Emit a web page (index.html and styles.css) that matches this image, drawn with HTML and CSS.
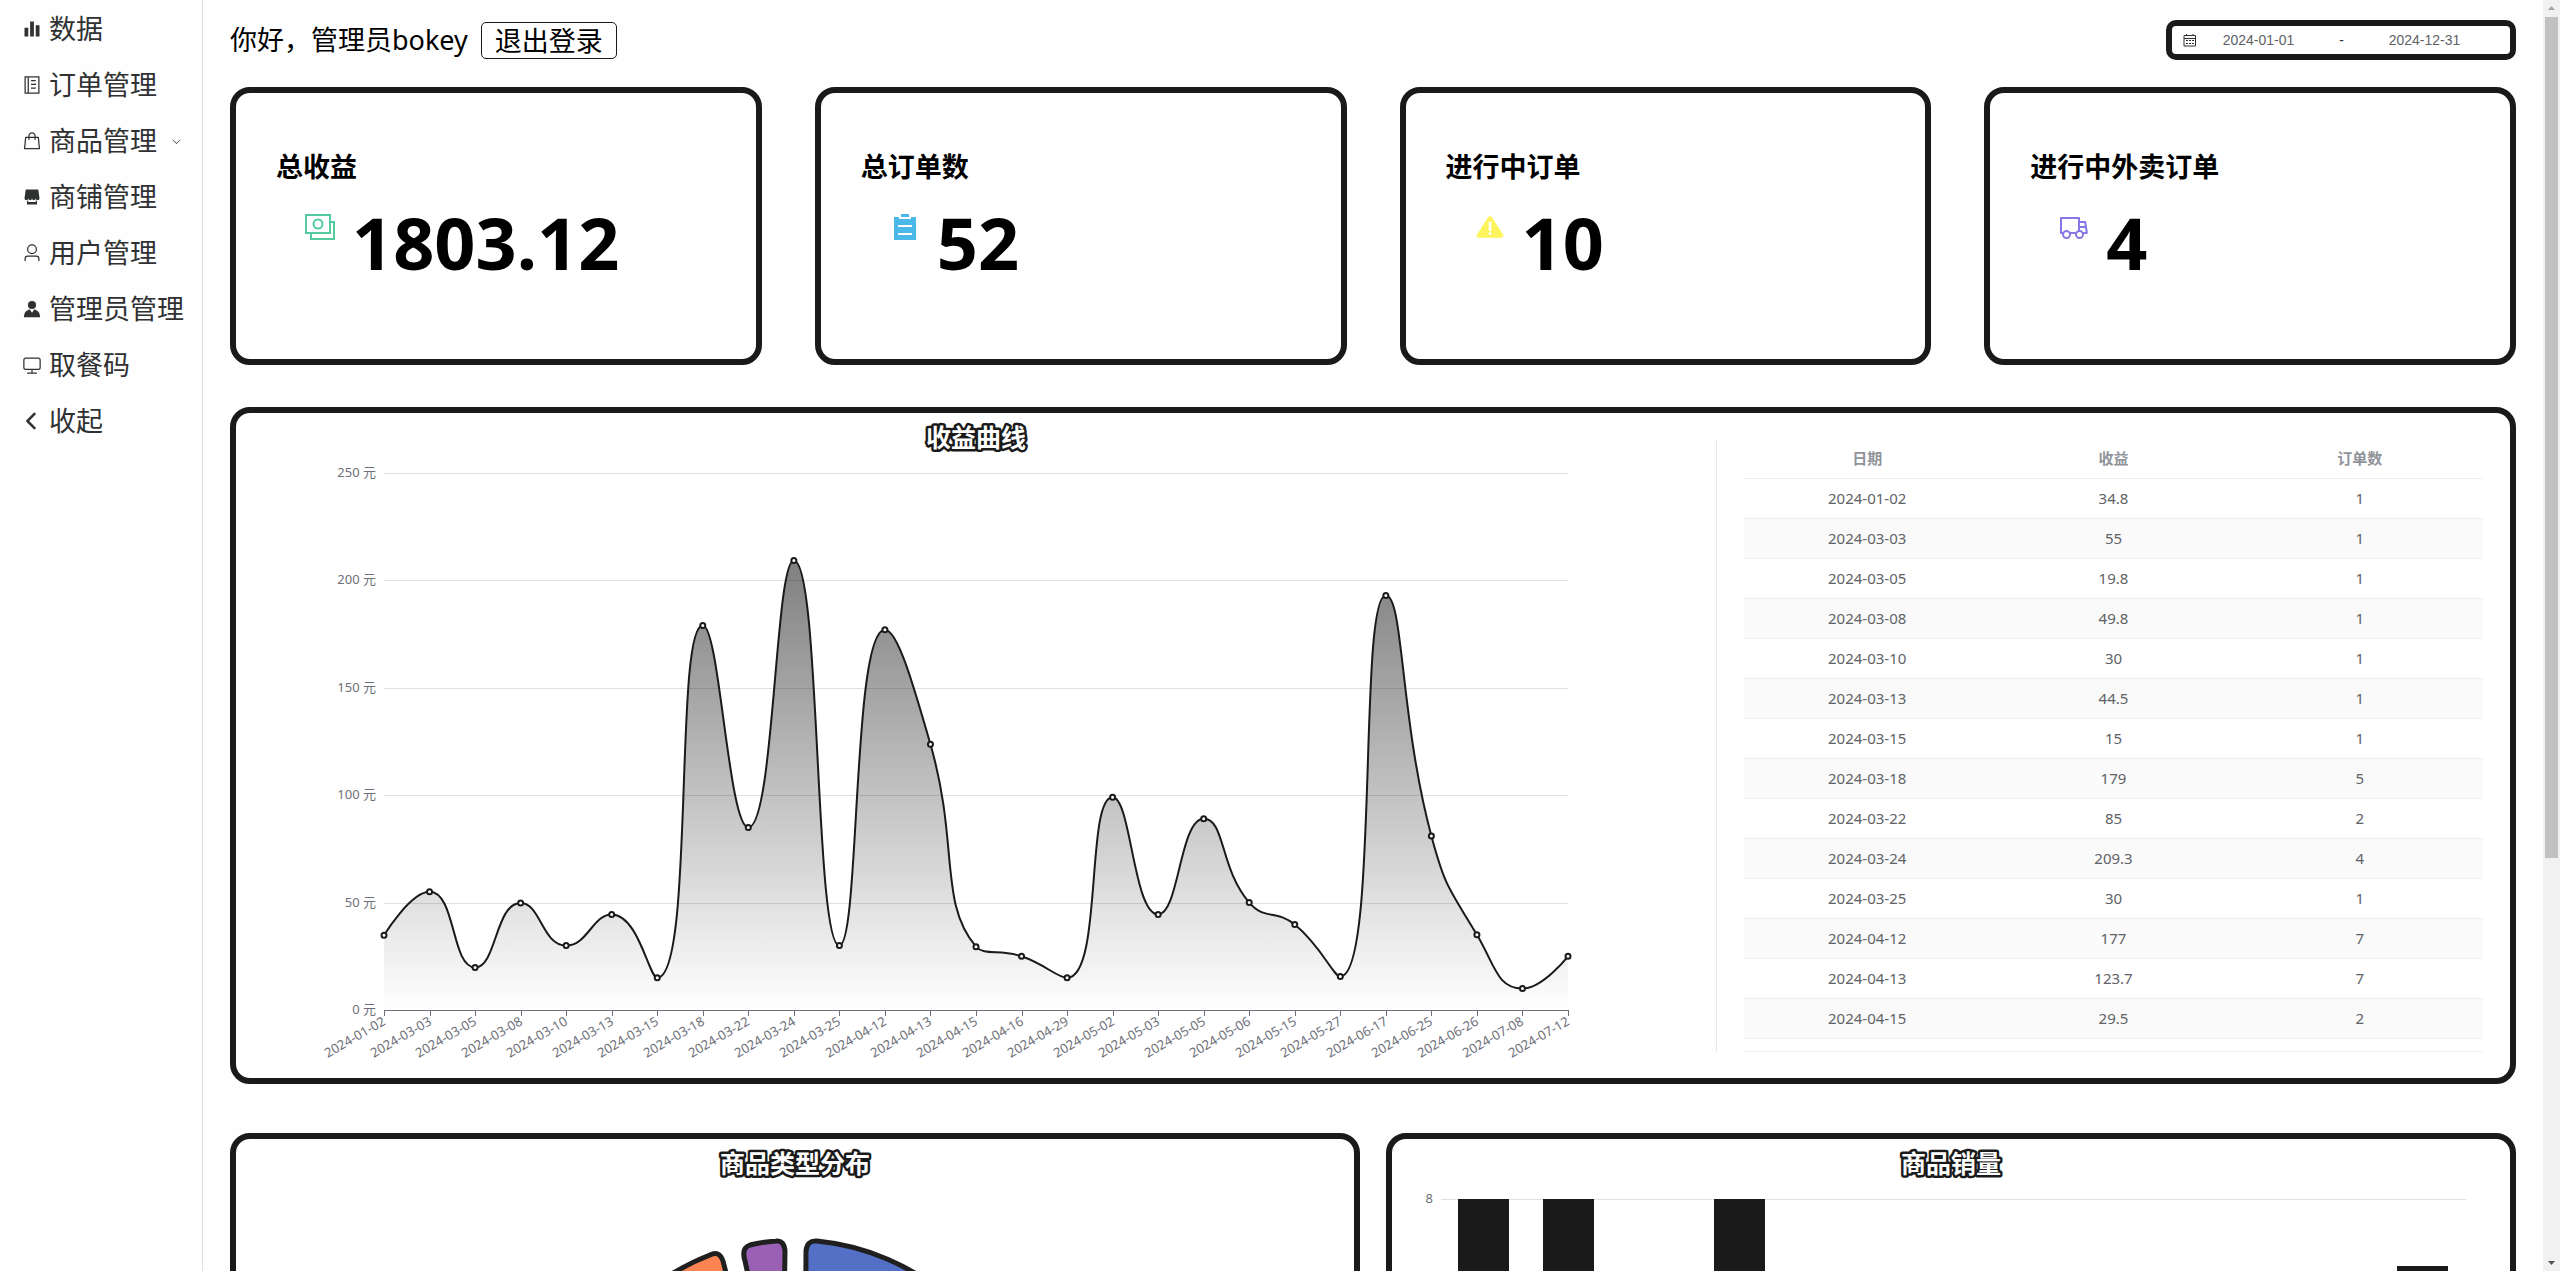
FILE: index.html
```html
<!DOCTYPE html>
<html lang="zh-CN">
<head>
  <meta charset="utf-8">
  <title>数据</title>
  <link rel="stylesheet" href="styles.css">
</head>
<body>
  <div class="app">
    <nav class="sidebar">
      <a class="nav-item" href="#data">
        <svg class="nav-icon" viewBox="0 0 1024 1024"><path d="M416 896V128h192v768zm-288 0V448h192v448zm576 0V320h192v576z"/></svg>
        <span>数据</span>
      </a>
      <a class="nav-item" href="#orders">
        <svg class="nav-icon" viewBox="0 0 1024 1024"><path fill-rule="evenodd" d="M128 64h768v896H128zM192 128v768h96V128zM352 128v768h480V128zM464 256h240v64H464zM464 448h160v64H464zM464 448h240v64H464zM464 640h240v64H464z"/><path d="M464 448h240v64H464z"/></svg>
        <span>订单管理</span>
      </a>
      <a class="nav-item" href="#goods">
        <svg class="nav-icon" viewBox="0 0 1024 1024"><path d="M320 288v-22.336C320 154.688 405.504 64 512 64s192 90.688 192 201.664v22.4h131.072a32 32 0 0 1 31.808 28.8l57.6 576a32 32 0 0 1-31.808 35.2H131.328a32 32 0 0 1-31.808-35.2l57.6-576a32 32 0 0 1 31.808-28.8H320zm64 0h256v-22.336C640 189.248 582.272 128 512 128c-70.272 0-128 61.248-128 137.664v22.4zm-64 64H217.92l-51.2 512h690.56l-51.264-512H704v96h-64v-96H384v96h-64z"/></svg>
        <span>商品管理</span>
        <svg class="nav-arrow" viewBox="0 0 1024 1024"><path d="M831.872 340.864 512 652.672 192.128 340.864a30.592 30.592 0 0 0-42.752 0 29.12 29.12 0 0 0 0 41.6L489.664 714.24a32 32 0 0 0 44.672 0l340.288-331.712a29.12 29.12 0 0 0 0-41.728 30.592 30.592 0 0 0-42.752 0z"/></svg>
      </a>
      <a class="nav-item" href="#shop">
        <svg class="nav-icon" viewBox="0 0 1024 1024"><path d="M704 704h64v192H256V704h64v64h384zm188.544-152.192C894.528 559.616 896 567.616 896 576a96 96 0 1 1-192 0 96 96 0 1 1-192 0 96 96 0 1 1-192 0 96 96 0 1 1-192 0c0-8.384 1.408-16.384 3.392-24.192L192 128h640z"/></svg>
        <span>商铺管理</span>
      </a>
      <a class="nav-item" href="#users">
        <svg class="nav-icon" viewBox="0 0 1024 1024"><path d="M512 512a192 192 0 1 0 0-384 192 192 0 0 0 0 384m0 64a256 256 0 1 1 0-512 256 256 0 0 1 0 512m320 320v-96a96 96 0 0 0-96-96H288a96 96 0 0 0-96 96v96a32 32 0 1 1-64 0v-96a160 160 0 0 1 160-160h448a160 160 0 0 1 160 160v96a32 32 0 1 1-64 0"/></svg>
        <span>用户管理</span>
      </a>
      <a class="nav-item" href="#admins">
        <svg class="nav-icon" viewBox="0 0 1024 1024"><path d="M628.736 528.896A416 416 0 0 1 928 928H96a415.872 415.872 0 0 1 299.264-399.104L512 704zM720 304a208 208 0 1 1-416 0 208 208 0 0 1 416 0"/></svg>
        <span>管理员管理</span>
      </a>
      <a class="nav-item" href="#pickup">
        <svg class="nav-icon" viewBox="0 0 1024 1024"><path d="M544 768v128h192a32 32 0 1 1 0 64H288a32 32 0 1 1 0-64h192V768H192A128 128 0 0 1 64 640V256a128 128 0 0 1 128-128h640a128 128 0 0 1 128 128v384a128 128 0 0 1-128 128zM192 192a64 64 0 0 0-64 64v384a64 64 0 0 0 64 64h640a64 64 0 0 0 64-64V256a64 64 0 0 0-64-64z"/></svg>
        <span>取餐码</span>
      </a>
      <a class="nav-item" href="#collapse">
        <svg class="nav-icon" viewBox="0 0 1024 1024"><path d="M685.248 104.704a64 64 0 0 1 0 90.496L368.448 512l316.8 316.8a64 64 0 0 1-90.496 90.496L232.704 557.248a64 64 0 0 1 0-90.496l362.048-362.048a64 64 0 0 1 90.496 0z"/></svg>
        <span>收起</span>
      </a>
    </nav>

    <main class="main">
      <header class="topbar">
        <span>你好，管理员bokey</span>
        <button class="logout" type="button">退出登录</button>
        <div class="date-range">
          <svg class="date-icon" viewBox="0 0 14 14"><path d="M1 2.5h11.500v10.500H1zM1 5.500h11.500M3.500 1v2M10 1v2" fill="none" stroke="#303133"/><path d="M3 7h2v1H3zM6 7h2v1H6zM9 7h2v1H9zM3 10h2v1H3zM6 10h2v1H6zM9 10h2v1H9z" fill="#303133"/></svg>
          <input type="text" value="2024-01-01" aria-label="开始日期">
          <span class="date-sep">-</span>
          <input type="text" value="2024-12-31" aria-label="结束日期">
        </div>
      </header>

      <section class="cards">
        <article class="card">
          <h3 class="card-label">总收益</h3>
          <div class="card-value">
            <svg class="card-icon" viewBox="0 0 32 32" fill="none" stroke="#54cb9f" stroke-width="2"><path d="M2 4h24v18H2zM26 11h4v17H7v-6"/><circle cx="14" cy="13" r="4.500"/></svg>
            <span>1803.12</span>
          </div>
        </article>
        <article class="card">
          <h3 class="card-label">总订单数</h3>
          <div class="card-value">
            <svg class="card-icon" viewBox="0 0 1024 1024" fill="#4ab8e8"><path d="M704 192h160v736H160V192h160v64h384v-64zM288 512h448v-64H288v64zm0 256h448v-64H288v64zm96-576V96h256v96H384z"/></svg>
            <span>52</span>
          </div>
        </article>
        <article class="card">
          <h3 class="card-label">进行中订单</h3>
          <div class="card-value">
            <svg class="card-icon" viewBox="0 0 1024 1024" fill="#fdf35a"><path d="M928.99 755.83 574.6 203.25c-12.89-20.16-36.76-32.58-62.6-32.58s-49.71 12.43-62.6 32.58L95.01 755.83c-12.91 20.12-12.9 44.91.01 65.03 12.92 20.12 36.78 32.51 62.59 32.49h708.78c25.82.01 49.68-12.37 62.59-32.49 12.91-20.12 12.92-44.91.01-65.03M554.67 768h-85.33v-85.33h85.33zm0-426.67v298.66h-85.33V341.32z"/></svg>
            <span>10</span>
          </div>
        </article>
        <article class="card">
          <h3 class="card-label">进行中外卖订单</h3>
          <div class="card-value">
            <svg class="card-icon" viewBox="0 0 1024 1024" fill="#8577e6"><path d="M128.896 736H96a32 32 0 0 1-32-32V224a32 32 0 0 1 32-32h576a32 32 0 0 1 32 32v96h164.544a32 32 0 0 1 31.616 27.136l54.144 352A32 32 0 0 1 922.688 736h-91.52a144 144 0 1 1-286.272 0H415.104a144 144 0 1 1-286.272 0zm23.36-64a143.872 143.872 0 0 1 239.488 0H568.32c17.088-25.6 42.24-45.376 71.744-55.808V256H128v416zm655.488 0h77.632l-19.648-128H704v64.896A144 144 0 0 1 807.744 672m48.128-192-14.72-96H704v96h151.872zM688 832a80 80 0 1 0 0-160 80 80 0 0 0 0 160m-416 0a80 80 0 1 0 0-160 80 80 0 0 0 0 160"/></svg>
            <span>4</span>
          </div>
        </article>
      </section>

      <section class="panel income">
        <svg class="chart" id="income-chart" viewBox="0 0 1480 665">
          <defs>
            <linearGradient id="area-fill" x1="0" y1="0" x2="0" y2="1">
              <stop offset="0" stop-color="#000" stop-opacity=".5"/>
              <stop offset="1" stop-color="#000" stop-opacity="0"/>
            </linearGradient>
          </defs>
          <text class="chart-title" x="740" y="34">收益曲线</text>
        </svg>
        <div class="income-side">
          <div class="table-box">
            <table class="income-table">
              <thead><tr><th>日期</th><th>收益</th><th>订单数</th></tr></thead>
              <tbody>
                <tr><td>2024-01-02</td><td>34.8</td><td>1</td></tr>
                <tr><td>2024-03-03</td><td>55</td><td>1</td></tr>
                <tr><td>2024-03-05</td><td>19.8</td><td>1</td></tr>
                <tr><td>2024-03-08</td><td>49.8</td><td>1</td></tr>
                <tr><td>2024-03-10</td><td>30</td><td>1</td></tr>
                <tr><td>2024-03-13</td><td>44.5</td><td>1</td></tr>
                <tr><td>2024-03-15</td><td>15</td><td>1</td></tr>
                <tr><td>2024-03-18</td><td>179</td><td>5</td></tr>
                <tr><td>2024-03-22</td><td>85</td><td>2</td></tr>
                <tr><td>2024-03-24</td><td>209.3</td><td>4</td></tr>
                <tr><td>2024-03-25</td><td>30</td><td>1</td></tr>
                <tr><td>2024-04-12</td><td>177</td><td>7</td></tr>
                <tr><td>2024-04-13</td><td>123.7</td><td>7</td></tr>
                <tr><td>2024-04-15</td><td>29.5</td><td>2</td></tr>
              </tbody>
            </table>
          </div>
        </div>
      </section>

      <section class="bottom">
        <div class="panel">
          <svg class="chart" viewBox="0 0 1118 665">
            <text class="chart-title" x="559" y="34">商品类型分布</text>
            <g stroke="#1f1f1f" stroke-width="5" stroke-linejoin="round">
              <path fill="#5470c6" d="M569 300L570 112Q571 101 581 102A237 237 0 0 1 790 290Z"/>
              <path fill="#9a60b4" d="M546 290L509 122Q505 109 514 106Q526 103 540 102Q548 101 549 112Z"/>
              <path fill="#fc8452" d="M530 290L487 122Q483 111 474 116A237 237 0 0 0 330 280Z"/>
            </g>
          </svg>
        </div>
        <div class="panel">
          <svg class="chart" viewBox="0 0 1118 665">
            <text class="chart-title" x="559" y="34">商品销量</text>
            <path class="grid-line" d="M49 60.500H1074"/>
            <text class="axis-label" x="41" y="64" text-anchor="end">8</text>
            <g fill="#1a1a1a">
              <rect x="66" y="60" width="51" height="536"/>
              <rect x="151" y="60" width="51" height="536"/>
              <rect x="322" y="60" width="51" height="536"/>
              <rect x="1005" y="127" width="51" height="469"/>
            </g>
          </svg>
        </div>
      </section>
    </main>

    <div class="scrollbar">
      <svg viewBox="0 0 17 17"><path d="M5 10h7L8.500 6z" fill="#a3a3a3"/></svg>
      <div class="scroll-track"><div class="scroll-thumb"></div></div>
      <svg viewBox="0 0 17 17"><path d="M5 7h7l-3.500 4z" fill="#505050"/></svg>
    </div>
  </div>
  <script src="chart.js"></script>
</body>
</html>
```
FILE: styles.css
```css
* {
  box-sizing: border-box;
}

body {
  margin: 0;
  background: #fefefe;
  color: #000;
  font-family: "Noto Sans", "Noto Sans CJK SC", sans-serif;
  font-size: 27px;
  line-height: 40px;
}

.app {
  display: flex;
  height: 100vh;
  overflow: hidden;
}

.sidebar {
  flex: none;
  width: 203px;
  padding-top: 1px;
  border-right: 1px solid #dcdfe6;
}

.nav-item {
  display: flex;
  align-items: center;
  height: 56px;
  padding-left: 22px;
  color: #303133;
  text-decoration: none;
  white-space: nowrap;
}

.nav-icon {
  flex: none;
  width: 20px;
  height: 20px;
  margin-right: 7px;
  fill: currentColor;
}

.nav-arrow {
  width: 11px;
  height: 11px;
  margin-left: 14px;
  fill: currentColor;
}

.main {
  flex: 1;
  min-width: 0;
  padding: 20px 27px 0;
}

.topbar {
  display: flex;
  align-items: center;
  gap: 13px;
  height: 40px;
  margin-bottom: 27px;
}

.logout {
  height: 37px;
  padding: 0 13px;
  border: 1px solid #1a1a1a;
  border-radius: 5px;
  background: #fff;
  color: #000;
  font: inherit;
  line-height: 35px;
}

.date-range {
  display: flex;
  align-items: center;
  width: 350px;
  height: 40px;
  margin-left: auto;
  padding: 0 24px 0 11px;
  border: 6px solid #1a1a1a;
  border-radius: 10px;
  background: #fff;
  color: #606266;
  font-family: "Liberation Sans", Arial, sans-serif;
  font-size: 14px;
  line-height: 20px;
}

.date-icon {
  flex: none;
  width: 14px;
  height: 14px;
}

.date-range input {
  flex: 1;
  min-width: 0;
  padding: 0;
  border: 0;
  background: none;
  color: inherit;
  font: inherit;
  text-align: center;
}

.date-sep {
  width: 43px;
  color: #303133;
  text-align: center;
}

.cards {
  display: grid;
  grid-template-columns: repeat(4, 1fr);
  gap: 53px;
  margin-bottom: 42px;
}

.card,
.panel {
  border: 6px solid #1a1a1a;
  border-radius: 20px;
  background: #fff;
}

.card {
  padding: 54px 40px 62px;
}

.card-label {
  margin: 0;
  font-size: 27px;
  font-weight: 700;
}

.card-value {
  display: flex;
  gap: 16px;
  padding-left: 28px;
  font-size: 72px;
  font-weight: 700;
  line-height: 110px;
}

.card-icon {
  width: 32px;
  height: 32px;
  margin-top: 24px;
}

.income {
  display: grid;
  grid-template-columns: 1480fr 794fr;
  margin-bottom: 49px;
}

.chart {
  display: block;
  width: 100%;
  height: auto;
}

.chart-title {
  fill: #fff;
  stroke: #1a1a1a;
  stroke-width: 5px;
  stroke-linejoin: round;
  paint-order: stroke;
  font-size: 25px;
  font-weight: 700;
  text-anchor: middle;
}

.axis-label {
  fill: #6e7079;
  font-size: 13px;
}

.grid-line {
  stroke: #e0e0e0;
}

.axis-line {
  stroke: #6e7079;
}

.curve {
  fill: none;
  stroke: #1a1a1a;
  stroke-width: 2px;
}

.curve-point {
  fill: #fff;
  stroke: #1a1a1a;
  stroke-width: 2px;
}

.income-side {
  display: flex;
  margin: 26px 0;
  padding: 0 27px;
  border-left: 1px solid #e4e7ed;
}

.table-box {
  flex: 1;
  border-bottom: 1px solid #ebeef5;
}

.income-table {
  width: 100%;
  border-collapse: separate;
  border-spacing: 0;
  table-layout: fixed;
  color: #606266;
  font-size: 15px;
  line-height: 23px;
  text-align: center;
}

.income-table th,
.income-table td {
  height: 40px;
  padding: 0;
  border-bottom: 1px solid #ebeef5;
}

.income-table th {
  color: #909399;
}

.income-table tbody tr:nth-child(even) {
  background: #fafafa;
}

.bottom {
  display: grid;
  grid-template-columns: 1fr 1fr;
  gap: 26px;
}

.scrollbar {
  display: flex;
  flex: none;
  flex-direction: column;
  width: 17px;
  background: #f1f1f1;
}

.scrollbar svg {
  flex: none;
  height: 17px;
}

.scroll-track {
  flex: 1;
  padding: 0 2px;
}

.scroll-thumb {
  height: 68%;
  background: #c1c1c1;
}
```
FILE: chart.js
```js
const data = [
  ['2024-01-02', 34.8], ['2024-03-03', 55], ['2024-03-05', 19.8], ['2024-03-08', 49.8],
  ['2024-03-10', 30], ['2024-03-13', 44.5], ['2024-03-15', 15], ['2024-03-18', 179],
  ['2024-03-22', 85], ['2024-03-24', 209.3], ['2024-03-25', 30], ['2024-04-12', 177],
  ['2024-04-13', 123.7], ['2024-04-15', 29.5], ['2024-04-16', 25], ['2024-04-29', 15],
  ['2024-05-02', 99], ['2024-05-03', 44.5], ['2024-05-05', 89], ['2024-05-06', 50],
  ['2024-05-15', 39.8], ['2024-05-27', 15.6], ['2024-06-17', 193], ['2024-06-25', 81],
  ['2024-06-26', 35], ['2024-07-08', 10], ['2024-07-12', 25]
];

const svg = document.getElementById('income-chart');
const left = 148, right = 1332, top0 = 60, base = 597, max = 250;

function add(name, attrs, text) {
  const el = document.createElementNS('http://www.w3.org/2000/svg', name);
  for (const key in attrs) el.setAttribute(key, attrs[key]);
  if (text !== undefined) el.textContent = text;
  svg.appendChild(el);
}

const yOf = v => base - (base - top0) * v / max;
const pts = data.map((d, i) => [left + (right - left) * i / (data.length - 1), yOf(d[1])]);
const clamp = (v, a, b) => Math.max(Math.min(v, Math.max(a, b)), Math.min(a, b));

// Smooth curve whose control points never leave the range of their segment.
function smoothPath(p) {
  let d = `M${p[0][0]} ${p[0][1]}`;
  let c0 = p[0];
  for (let i = 1; i < p.length; i++) {
    const prev = p[i - 1], cur = p[i], next = p[i + 1];
    let c1 = cur, n0 = cur;
    if (next) {
      const lp = Math.hypot(cur[0] - prev[0], cur[1] - prev[1]);
      const ln = Math.hypot(next[0] - cur[0], next[1] - cur[1]);
      const r = ln / (ln + lp);
      n0 = [0, 1].map(k => clamp(cur[k] + (next[k] - prev[k]) * 0.5 * r, cur[k], next[k]));
      c1 = [0, 1].map(k => clamp(cur[k] - (n0[k] - cur[k]) * lp / ln, prev[k], cur[k]));
      n0 = [0, 1].map(k => cur[k] + (cur[k] - c1[k]) * ln / lp);
    }
    d += `C${c0[0]} ${c0[1]} ${c1[0]} ${c1[1]} ${cur[0]} ${cur[1]}`;
    c0 = n0;
  }
  return d;
}

for (let v = 0; v <= max; v += 50) {
  const y = Math.round(yOf(v)) + 0.5;
  add('path', { class: v ? 'grid-line' : 'axis-line', d: `M${left} ${y}H${right}` });
  add('text', { class: 'axis-label', x: left - 8, y: y + 3, 'text-anchor': 'end' }, `${v} 元`);
}

const line = smoothPath(pts);
add('path', { fill: 'url(#area-fill)', d: `${line}V${base}H${left}Z` });
add('path', { class: 'curve', d: line });

data.forEach((d, i) => {
  const [x, y] = pts[i];
  const tx = Math.round(x) + 0.5;
  add('path', { class: 'axis-line', d: `M${tx} ${base}v6` });
  add('text', { class: 'axis-label', 'text-anchor': 'end', transform: `translate(${tx + 2} ${base + 14}) rotate(-30)` }, d[0]);
  add('circle', { class: 'curve-point', cx: x, cy: y, r: 2.5 });
});
```
